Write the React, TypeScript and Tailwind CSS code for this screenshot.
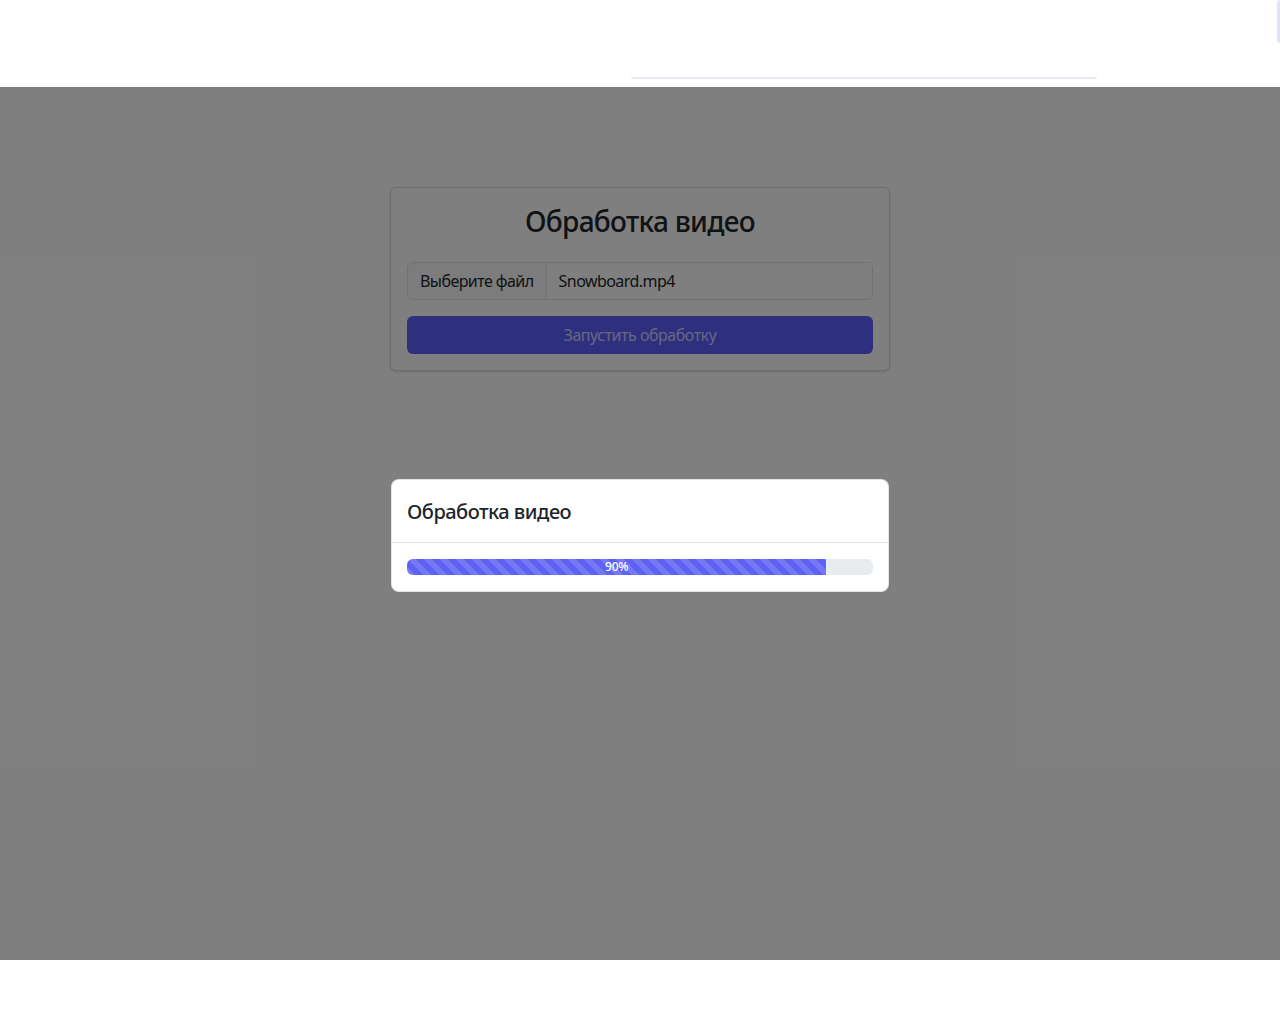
const font = { fontFamily: '"Noto Sans", "Open Sans", sans-serif' };

function UploadCard() {
  return (
    <div className="w-[500px] rounded-md border border-black/15 bg-white p-4 shadow-sm">
      <h3 className="mb-[23px] pt-px text-center text-[28px] font-medium leading-[1.2] tracking-[-0.025em] text-[#212529]">
        Обработка видео
      </h3>
      <div className="mb-4 flex h-[38px] overflow-hidden rounded-md border border-[#dee2e6] text-base tracking-[-0.035em] text-[#212529]">
        <span className="flex items-center border-r border-[#dee2e6] bg-[#f8f9fa] px-3">
          Выберите файл
        </span>
        <span className="flex flex-1 items-center bg-white px-3">Snowboard.mp4</span>
      </div>
      <button className="h-[38px] w-full rounded-md bg-[#5c5fff] text-base tracking-[-0.03em] text-white/70">
        Запустить обработку
      </button>
    </div>
  );
}

function ProgressModal({ percent }: { percent: number }) {
  return (
    <div className="w-[498px] rounded-lg border border-black/10 bg-white">
      <div className="border-b border-[#dee2e6] px-[15px] pb-[15px] pt-[17px]">
        <h5 className="text-xl font-medium leading-[1.5] tracking-[-0.025em] text-[#212529]">
          Обработка видео
        </h5>
      </div>
      <div className="px-[15px] py-4">
        <div className="flex h-4 overflow-hidden rounded-md bg-[#e9ecef]">
          <div
            className="flex items-center justify-center bg-[#5d61f4] bg-[linear-gradient(45deg,rgba(255,255,255,.15)_25%,transparent_25%,transparent_50%,rgba(255,255,255,.15)_50%,rgba(255,255,255,.15)_75%,transparent_75%,transparent)] bg-[length:16px_16px] text-xs font-medium leading-none tracking-[-0.02em] text-white"
            style={{ width: `${percent}%` }}
          >
            {percent}%
          </div>
        </div>
      </div>
    </div>
  );
}

export default function App() {
  return (
    <div className="relative h-[1024px] overflow-hidden bg-white" style={font}>
      <header className="flex h-[87px] items-end justify-center pb-[8px]">
        <div className="ml-[448px] h-[2px] w-[466px] rounded bg-[#e8ecf6]" />
      </header>
      <div className="absolute right-0 top-0 h-[43px] w-[3px] rounded-l bg-[#dfe5f8]" />

      <main className="flex justify-center pt-[100px]">
        <UploadCard />
      </main>

      {/* backdrop */}
      <div className="absolute inset-x-0 top-[87px] h-[873px] bg-black/50" />

      <div className="absolute inset-x-0 top-[479px] flex justify-center">
        <ProgressModal percent={90} />
      </div>
    </div>
  );
}
